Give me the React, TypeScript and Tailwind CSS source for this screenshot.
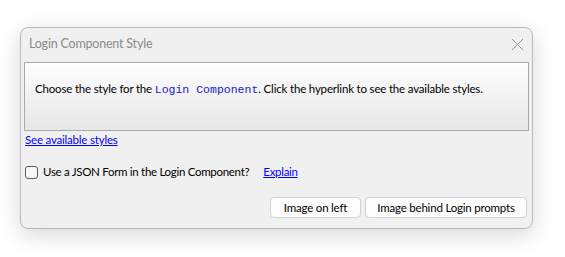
import { X } from "lucide-react";

const UI = "font-['Segoe_UI','Lato','Noto_Sans',sans-serif]";

export default function App() {
  return (
    <div className={`w-[565px] h-[257px] bg-white pt-[27px] pl-[20px] ${UI}`}>
      <div className="w-[513px] h-[202px] rounded-[8px] border border-[#b9b9b9] bg-[#f0f0f0] shadow-[0_6px_22px_rgba(0,0,0,0.16)] flex flex-col">
        {/* title bar */}
        <div className="h-[32px] mb-[2px] flex items-center justify-between pl-[8px] pr-[4px]">
          <span className="text-[12.5px] tracking-[-0.2px] text-[#8a8a8a]">Login Component Style</span>
          <X className="w-[21px] h-[21px] text-[#8f8f8f]" strokeWidth={1.1} />
        </div>

        {/* message panel */}
        <div className="mx-[3px] h-[69px] border border-[#a9a9a9] bg-gradient-to-b from-[#fdfdfd] to-[#e7e7e7] pt-[18px] pl-[10px] text-[11.5px] leading-[16px] tracking-[-0.18px] text-black whitespace-nowrap">
          Choose the style for the{" "}
          <span className="font-['Liberation_Mono',monospace] text-[11.5px] tracking-normal text-[#2020c8]">Login Component</span>. Click the hyperlink to see the available styles.
        </div>

        <a className="mt-[1px] ml-[4px] text-[11.5px] tracking-[-0.2px] text-[#0000ff] underline leading-[16px] w-fit" href="#">
          See available styles
        </a>

        <div className="mt-[17px] ml-[4px] flex items-center h-[14px] text-[11.5px] tracking-[-0.3px] whitespace-nowrap">
          <span className="w-[13px] h-[13px] rounded-[3px] border border-[#5c5c5c] bg-[#f7f7f7]" />
          <span className="ml-[5px]">Use a JSON Form in the Login Component?</span>
          <a className="ml-[14px] text-[#0000ff] underline" href="#">Explain</a>
        </div>

        <div className="mt-[18px] mr-[5px] flex justify-end gap-[4px] text-[11.5px] tracking-[-0.2px] whitespace-nowrap">
          <button className="w-[91px] h-[21px] rounded-[4px] border border-[#d2d2d2] bg-[#fdfdfd]">Image on left</button>
          <button className="w-[162px] h-[21px] rounded-[4px] border border-[#d2d2d2] bg-[#fdfdfd]">Image behind Login prompts</button>
        </div>
      </div>
    </div>
  );
}
